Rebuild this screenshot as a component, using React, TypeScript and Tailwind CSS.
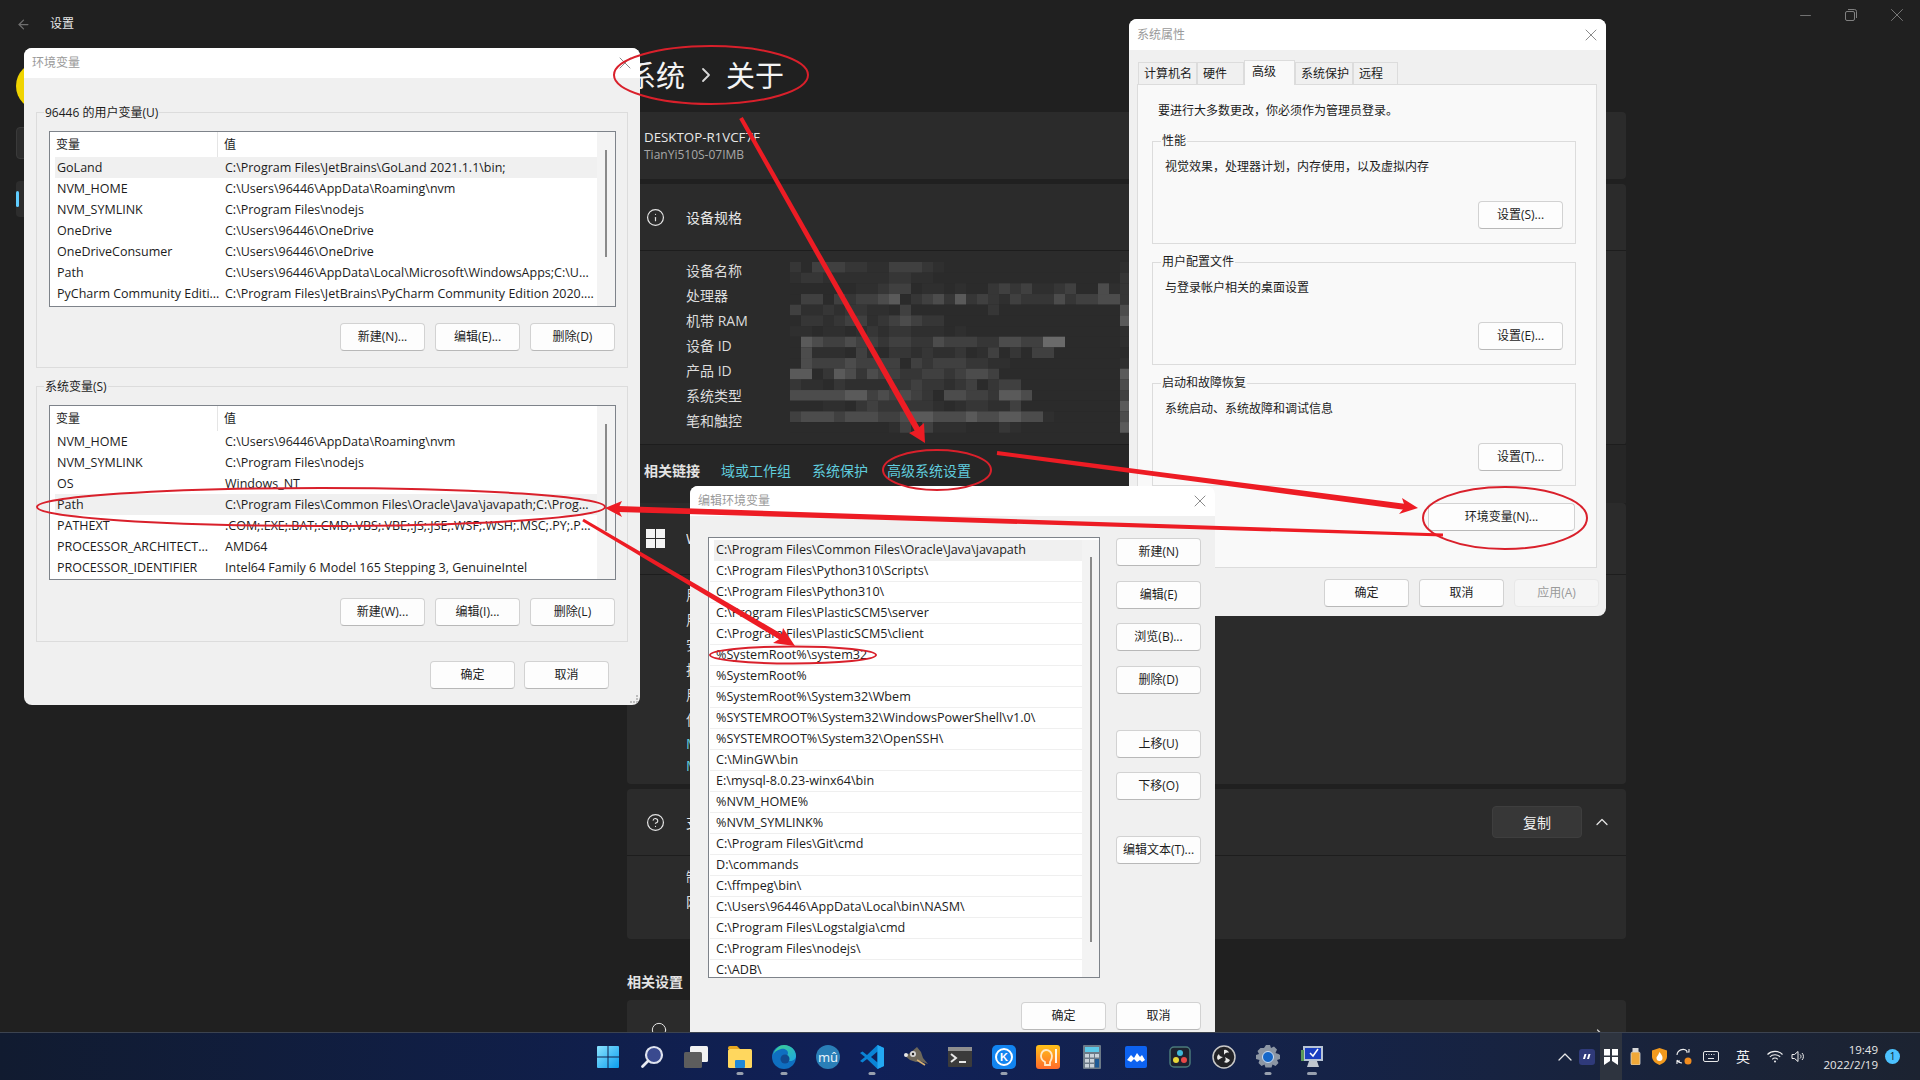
import { ArrowLeft, ChevronRight, ChevronUp, Circle, Info, CircleHelp, Minus, X } from "lucide-react";

const USER_VARS = [
    ["GoLand", "C:\\Program Files\\JetBrains\\GoLand 2021.1.1\\bin;"],
    ["NVM_HOME", "C:\\Users\\96446\\AppData\\Roaming\\nvm"],
    ["NVM_SYMLINK", "C:\\Program Files\\nodejs"],
    ["OneDrive", "C:\\Users\\96446\\OneDrive"],
    ["OneDriveConsumer", "C:\\Users\\96446\\OneDrive"],
    ["Path", "C:\\Users\\96446\\AppData\\Local\\Microsoft\\WindowsApps;C:\\U..."],
    ["PyCharm Community Editi...", "C:\\Program Files\\JetBrains\\PyCharm Community Edition 2020...."],
];

const SYSTEM_VARS = [
    ["NVM_HOME", "C:\\Users\\96446\\AppData\\Roaming\\nvm"],
    ["NVM_SYMLINK", "C:\\Program Files\\nodejs"],
    ["OS", "Windows_NT"],
    ["Path", "C:\\Program Files\\Common Files\\Oracle\\Java\\javapath;C:\\Prog..."],
    ["PATHEXT", ".COM;.EXE;.BAT;.CMD;.VBS;.VBE;.JS;.JSE;.WSF;.WSH;.MSC;.PY;.P..."],
    ["PROCESSOR_ARCHITECT...", "AMD64"],
    ["PROCESSOR_IDENTIFIER", "Intel64 Family 6 Model 165 Stepping 3, GenuineIntel"],
];

const PATH_ENTRIES = [
    "C:\\Program Files\\Common Files\\Oracle\\Java\\javapath",
    "C:\\Program Files\\Python310\\Scripts\\",
    "C:\\Program Files\\Python310\\",
    "C:\\Program Files\\PlasticSCM5\\server",
    "C:\\Program Files\\PlasticSCM5\\client",
    "%SystemRoot%\\system32",
    "%SystemRoot%",
    "%SystemRoot%\\System32\\Wbem",
    "%SYSTEMROOT%\\System32\\WindowsPowerShell\\v1.0\\",
    "%SYSTEMROOT%\\System32\\OpenSSH\\",
    "C:\\MinGW\\bin",
    "E:\\mysql-8.0.23-winx64\\bin",
    "%NVM_HOME%",
    "%NVM_SYMLINK%",
    "C:\\Program Files\\Git\\cmd",
    "D:\\commands",
    "C:\\ffmpeg\\bin\\",
    "C:\\Users\\96446\\AppData\\Local\\bin\\NASM\\",
    "C:\\Program Files\\Logstalgia\\cmd",
    "C:\\Program Files\\nodejs\\",
    "C:\\ADB\\",
];

const SPEC_LABELS = ["设备名称", "处理器", "机带 RAM", "设备 ID", "产品 ID", "系统类型", "笔和触控"];

// pixelated block over the device specs, one digit per cell
const MOSAIC = [
    "2033322113332100000000000000001",
    "1221111112211000000000000000002",
    "0000001123301101002323112300412",
    "0330323345023425232132224233442",
    "3112122110300000002000000000004",
    "0221233123432200000000000000005",
    "1101101212211101000000000000001",
    "0543343323322433322443366000001",
    "0411103102212112013020330000000",
    "0433343333032333221100000000001",
    "5502542433223323443000000000005",
    "2110211112232212302330000000004",
    "4444455343432044332554000000003",
    "0001102322222101221130000000005",
    "3444344433455444544554410000004",
    "0000000001303111000210000000005",
];
const MOSAIC_COLORS = ["#2b2b2b", "#2f2f2f", "#363636", "#404040", "#4c4c4c", "#5a5a5a", "#6a6a6a"];

const Btn = ({ label, w = "w-[85px]", disabled = false }: { label: string; w?: string; disabled?: boolean }) => (
    <div
        className={`${w} h-[28px] shrink-0 flex items-center justify-center rounded-[4px] border text-[12px] whitespace-nowrap ${
            disabled
                ? "bg-[#f5f5f5] border-[#e8e8e8] text-[#9a9a9a]"
                : "bg-[#fdfdfd] border-[#d2d2d2] border-b-[#b8b8b8] text-[#1c1c1c]"
        }`}
    >
        {label}
    </div>
);

const TitleBar = ({ title, h = "h-[30px]" }: { title: string; h?: string }) => (
    <div className={`${h} shrink-0 bg-white rounded-t-[8px] flex items-center justify-between pl-[8px] pr-[5px]`}>
        <span className="text-[12px] text-[#9a9a9a]">{title}</span>
        <X size={20} strokeWidth={1.1} className="text-[#808080]" />
    </div>
);

const VarList = ({ rows, selected, h }: { rows: string[][]; selected: number; h: string }) => (
    <div className={`${h} bg-white border border-[#7e838a] flex overflow-hidden`}>
        <div className="w-[547px] shrink-0">
            <div className="h-[25px] flex items-center text-[12px] text-[#1c1c1c]">
                <div className="w-[168px] h-full flex items-center pl-[6px] border-r border-[#e5e5e5]">变量</div>
                <div className="pl-[6px]">值</div>
            </div>
            {rows.map((row, index) => (
                <div
                    key={index}
                    className={`ml-[5px] h-[21px] pt-[1px] flex items-center text-[12.5px] text-[#1c1c1c] whitespace-nowrap ${
                        index === selected ? "bg-[#f0f0f0]" : ""
                    }`}
                >
                    <div className="w-[170px] pl-[2px] shrink-0">{row[0]}</div>
                    <div>{row[1]}</div>
                </div>
            ))}
        </div>
        <div className="flex-1 bg-[#f3f3f3] flex justify-center">
            <div className="w-[2px] h-[107px] mt-[18px] bg-[#8a8a8a]" />
        </div>
    </div>
);

const VarGroup = ({
    title,
    rows,
    selected,
    listH,
    btnMt,
    labels,
}: {
    title: string;
    rows: string[][];
    selected: number;
    listH: string;
    btnMt: string;
    labels: string[];
}) => (
    <div className="relative border border-[#dcdcdc] h-[256px] pl-[12px] pr-[11px] pt-[18px]">
        <span className="absolute -top-[8px] left-[7px] bg-[#f0f0f0] px-[1px] text-[12px] leading-[16px] text-[#1c1c1c]">
            {title}
        </span>
        <VarList rows={rows} selected={selected} h={listH} />
        <div className={`flex justify-end gap-[10px] pr-[1px] ${btnMt}`}>
            {labels.map((label) => (
                <Btn key={label} label={label} />
            ))}
        </div>
    </div>
);

const EnvWindow = () => (
    <div className="absolute left-[24px] top-[48px] w-[616px] h-[657px] bg-[#f0f0f0] rounded-[8px] flex flex-col">
        <TitleBar title="环境变量" />
        <div className="px-[12px] pt-[34px]">
            <VarGroup
                title="96446 的用户变量(U)"
                rows={USER_VARS}
                selected={0}
                listH="h-[176px]"
                btnMt="mt-[16px]"
                labels={["新建(N)...", "编辑(E)...", "删除(D)"]}
            />
            <div className="h-[18px]" />
            <VarGroup
                title="系统变量(S)"
                rows={SYSTEM_VARS}
                selected={3}
                listH="h-[175px]"
                btnMt="mt-[18px]"
                labels={["新建(W)...", "编辑(I)...", "删除(L)"]}
            />
            <div className="flex justify-end gap-[9px] mt-[19px] pr-[19px]">
                <Btn label="确定" />
                <Btn label="取消" />
            </div>
        </div>
        <div className="absolute right-[2px] bottom-[2px] w-[8px] h-[8px] border-r-2 border-b-2 border-dotted border-[#bdbdbd]" />
    </div>
);

const PropGroup = ({ title, desc, button }: { title: string; desc: string; button: string }) => (
    <div className="relative h-[103px] border border-[#dcdcdc] px-[12px] pt-[17px] mb-[18px]">
        <span className="absolute -top-[9px] left-[8px] bg-[#f9f9f9] px-[1px] text-[12px] leading-[16px] text-[#1c1c1c]">
            {title}
        </span>
        <div className="text-[12px] leading-[16px] text-[#1c1c1c]">{desc}</div>
        <div className="flex justify-end mt-[26px]">
            <Btn label={button} />
        </div>
    </div>
);

const SystemWindow = () => {
    const tabs = [
        { name: "计算机名", w: "w-[59px]" },
        { name: "硬件", w: "w-[47px]" },
        { name: "高级", w: "w-[51px]", active: true },
        { name: "系统保护", w: "w-[58px]" },
        { name: "远程", w: "w-[45px]" },
    ];
    return (
        <div className="absolute left-[1129px] top-[19px] w-[477px] h-[597px] bg-[#f0f0f0] rounded-[8px] flex flex-col">
            <TitleBar title="系统属性" h="h-[31px]" />
            <div className="pl-[8px] pr-[9px] pt-[8px] h-[34px] flex items-end">
                <div className="pl-[1px] flex items-end">
                    {tabs.map((tab) =>
                        tab.active ? (
                            <div
                                key={tab.name}
                                className={`${tab.w} h-[25px] -mb-[1px] relative z-10 bg-[#f9f9f9] border border-b-0 border-[#dcdcdc] text-[12px] pl-[7px] pt-[2px] text-[#1c1c1c]`}
                            >
                                {tab.name}
                            </div>
                        ) : (
                            <div
                                key={tab.name}
                                className={`${tab.w} h-[22px] bg-[#f0f0f0] border border-b-0 border-[#dcdcdc] text-[12px] pl-[5px] flex items-center text-[#1c1c1c]`}
                            >
                                {tab.name}
                            </div>
                        )
                    )}
                </div>
            </div>
            <div className="ml-[8px] mr-[9px] h-[484px] bg-[#f9f9f9] border border-[#dcdcdc] pl-[14px] pr-[20px] pt-[18px]">
                <div className="pl-[6px] text-[12px] leading-[16px] text-[#1c1c1c]">
                    {"要进行大多数更改\uFF0C你必须作为管理员登录。"}
                </div>
                <div className="h-[22px]" />
                <PropGroup
                    title="性能"
                    desc={"视觉效果\uFF0C处理器计划\uFF0C内存使用\uFF0C以及虚拟内存"}
                    button="设置(S)..."
                />
                <PropGroup title="用户配置文件" desc="与登录帐户相关的桌面设置" button="设置(E)..." />
                <PropGroup title="启动和故障恢复" desc="系统启动、系统故障和调试信息" button="设置(T)..." />
                <div className="flex justify-end pr-[1px] -mt-[1px]">
                    <Btn label="环境变量(N)..." w="w-[147px]" />
                </div>
            </div>
            <div className="flex justify-end gap-[10px] pr-[7px] mt-[11px]">
                <Btn label="确定" />
                <Btn label="取消" />
                <Btn label="应用(A)" disabled />
            </div>
        </div>
    );
};

const EditWindow = () => {
    const side = [
        { label: "新建(N)", mt: "mt-[1px]" },
        { label: "编辑(E)", mt: "mt-[15px]" },
        { label: "浏览(B)...", mt: "mt-[14px]" },
        { label: "删除(D)", mt: "mt-[15px]" },
        { label: "上移(U)", mt: "mt-[36px]" },
        { label: "下移(O)", mt: "mt-[14px]" },
        { label: "编辑文本(T)...", mt: "mt-[36px]" },
    ];
    return (
        <div className="absolute left-[690px] top-[486px] w-[525px] h-[546px] bg-[#f0f0f0] rounded-t-[8px] flex flex-col">
            <TitleBar title="编辑环境变量" />
            <div className="pl-[18px] pr-[14px] pt-[21px]">
                <div className="flex gap-[16px]">
                    <div className="w-[392px] h-[441px] shrink-0 bg-white border border-[#7e838a] flex overflow-hidden pt-[2px]">
                        <div className="w-[373px] shrink-0 pl-[1px]">
                            {PATH_ENTRIES.map((entry, index) => (
                                <div
                                    key={entry}
                                    className={`h-[21px] flex items-center text-[12.6px] text-[#1c1c1c] whitespace-nowrap border-b ${
                                        index === 0 ? "bg-[#f0f0f0] border-[#f0f0f0] ml-[4px] pl-[2px]" : "border-[#efefef] pl-[6px]"
                                    }`}
                                >
                                    {entry}
                                </div>
                            ))}
                        </div>
                        <div className="flex-1 bg-[#f3f3f3] flex justify-center">
                            <div className="w-[2px] h-[385px] mt-[17px] bg-[#8a8a8a]" />
                        </div>
                    </div>
                    <div className="flex flex-col">
                        {side.map((item) => (
                            <div key={item.label} className={item.mt}>
                                <Btn label={item.label} />
                            </div>
                        ))}
                    </div>
                </div>
                <div className="flex justify-end gap-[10px] mt-[24px]">
                    <Btn label="确定" />
                    <Btn label="取消" />
                </div>
            </div>
        </div>
    );
};

const Card = ({ className = "", children }: { className?: string; children?: React.ReactNode }) => (
    <div className={`bg-[#2b2b2b] rounded-[4px] ${className}`}>{children}</div>
);

// rows that sit almost wholly behind the edit window, only their first strokes show
const PeekRow = ({ label, h = "h-[25px]", color = "text-[#dcdcdc]" }: { label: string; h?: string; color?: string }) => (
    <div className={`${h} w-[5px] overflow-hidden flex items-center text-[14px] whitespace-nowrap ${color}`}>{label}</div>
);

const SettingsPage = () => (
    <div className="absolute inset-0 bg-[#202020] flex flex-col text-white">
        <div className="h-[48px] shrink-0 flex items-center">
            <ArrowLeft size={15} className="ml-[16px] text-[#6f6f6f]" />
            <span className="ml-[19px] text-[12px] text-[#e8e8e8]">设置</span>
            <div className="ml-auto flex items-center -mt-[18px] text-[#808080]">
                <div className="w-[46px] flex justify-center">
                    <Minus size={17} strokeWidth={1.2} />
                </div>
                <div className="w-[46px] flex justify-center">
                    <svg width="12" height="12" viewBox="0 0 12 12" fill="none" stroke="currentColor" strokeWidth="1">
                        <rect x="0.500" y="2.500" width="9" height="9" rx="1.500" />
                        <path d="M3 0.500h6.500a2 2 0 0 1 2 2V9" />
                    </svg>
                </div>
                <div className="w-[46px] flex justify-center">
                    <X size={22} strokeWidth={1} />
                </div>
            </div>
        </div>
        <div className="flex flex-1 min-h-0">
            <aside className="w-[627px] shrink-0 pl-[16px]">
                <div className="w-[48px] h-[48px] mt-[14px] rounded-full bg-[#f0d400]" />
                <div className="w-[200px] h-[32px] mt-[17px] rounded-[4px] bg-[#2d2d2d] border border-[#3a3a3a]" />
                <div className="relative w-[200px] h-[36px] mt-[22px] rounded-[4px] bg-[#2d2d2d]">
                    <div className="absolute left-0 top-[10px] w-[3px] h-[16px] rounded-full bg-[#60cdff]" />
                </div>
            </aside>
            <main className="w-[999px] shrink-0 flex flex-col">
                <div className="h-[54px] shrink-0 flex items-center text-[29px] leading-none text-[#f4f4f4]">
                    <span>系统</span>
                    <ChevronRight size={24} strokeWidth={1.8} className="ml-[9px] mr-[8px] text-[#d8d8d8]" />
                    <span>关于</span>
                </div>
                <div className="h-[10px] shrink-0" />
                <Card className="h-[67px] shrink-0 pl-[17px] flex flex-col justify-center">
                    <div className="text-[13.3px] leading-[18px] text-[#e8e8e8]">DESKTOP-R1VCF7F</div>
                    <div className="text-[12px] leading-[18px] text-[#a8a8a8]">TianYi510S-07IMB</div>
                </Card>
                <div className="h-[5px] shrink-0" />
                <Card className="shrink-0">
                    <div className="h-[67px] flex items-center pl-[19px] gap-[21px] border-b border-[#1d1d1d]">
                        <Info size={19} strokeWidth={1.5} className="text-[#e4e4e4]" />
                        <span className="text-[14px] text-[#e8e8e8]">设备规格</span>
                    </div>
                    <div className="h-[194px] relative pl-[59px] pt-[7px]">
                        {SPEC_LABELS.map((label) => (
                            <div key={label} className="h-[25px] flex items-center text-[14px] text-[#dcdcdc]">
                                {label}
                            </div>
                        ))}
                        <svg className="absolute left-[163px] top-[11px]" width="341" height="171">
                            {MOSAIC.map((row, y) =>
                                row.split("").map((c, x) => (
                                    <rect
                                        key={`${x}-${y}`}
                                        x={x * 11}
                                        y={y * 10.67}
                                        width="11"
                                        height="10.7"
                                        fill={MOSAIC_COLORS[Number(c)]}
                                    />
                                ))
                            )}
                        </svg>
                    </div>
                </Card>
                <div className="h-[59px] shrink-0 bg-[#262626] border-t border-[#1d1d1d] pl-[17px] flex items-center -mt-[1px] pb-[8px] text-[14px] gap-[21px]">
                    <span className="font-bold text-[#e4e4e4]">相关链接</span>
                    <span className="text-[#60cdde]">域或工作组</span>
                    <span className="text-[#60cdde]">系统保护</span>
                    <span className="text-[#60cdde] -ml-[2px]">高级系统设置</span>
                </div>
                <Card className="h-[281px] shrink-0">
                    <div className="h-[72px] flex items-center pl-[19px] gap-[21px] border-b border-[#1d1d1d]">
                        <svg width="19" height="19" viewBox="0 0 19 19" fill="#f4f4f4">
                            <rect x="0" y="0" width="9" height="9" />
                            <rect x="10" y="0" width="9" height="9" />
                            <rect x="0" y="10" width="9" height="9" />
                            <rect x="10" y="10" width="9" height="9" />
                        </svg>
                        <PeekRow label="Windows 规格" h="h-[20px]" color="text-[#e8e8e8]" />
                    </div>
                    <div className="pl-[59px] pt-[7px]">
                        {["用户", "用途", "安装日期", "批次", "用量", "使用"].map((label) => (
                            <PeekRow key={label} label={label} />
                        ))}
                        <PeekRow label="Microsoft 服务协议" h="h-[22px]" color="text-[#60cdde]" />
                        <PeekRow label="Microsoft 软件许可" h="h-[22px]" color="text-[#60cdde]" />
                    </div>
                </Card>
                <div className="h-[5px] shrink-0" />
                <Card className="h-[150px] shrink-0">
                    <div className="h-[67px] flex items-center pl-[19px] gap-[21px] pr-[14px] border-b border-[#1d1d1d]">
                        <CircleHelp size={19} strokeWidth={1.5} className="text-[#e4e4e4]" />
                        <PeekRow label="支持" h="h-[20px]" color="text-[#e8e8e8]" />
                        <div className="ml-auto w-[90px] h-[32px] rounded-[4px] bg-[#373737] border border-[#3e3e3e] flex items-center justify-center text-[14px] text-[#f0f0f0]">
                            复制
                        </div>
                        <ChevronUp size={20} strokeWidth={1.5} className="-ml-[11px] text-[#e4e4e4]" />
                    </div>
                    <div className="pl-[59px] pt-[8px]">
                        <PeekRow label="制造商" />
                        <PeekRow label="网站" />
                    </div>
                </Card>
                <div className="h-[61px] shrink-0 flex items-end pb-[8px] text-[14px] font-bold text-[#e4e4e4]">相关设置</div>
                <Card className="flex-1 flex items-start pl-[24px] pr-[16px] pt-[22px] gap-[24px] min-h-[40px]">
                    <Circle size={16} strokeWidth={1.5} className="text-[#e4e4e4]" />
                    <PeekRow label="产品密钥" h="h-[19px]" color="text-[#e8e8e8]" />
                    <ChevronRight size={20} strokeWidth={1.5} className="ml-auto mt-[3px] text-[#cfcfcf]" />
                </Card>
            </main>
        </div>
    </div>
);

const Arrow = ({
    from,
    to,
    w1,
    w2,
    head,
}: {
    from: number[];
    to: number[];
    w1: number;
    w2: number;
    head: string;
}) => {
    const dx = to[0] - from[0];
    const dy = to[1] - from[1];
    const len = Math.hypot(dx, dy);
    const nx = -dy / len;
    const ny = dx / len;
    const pts = [
        [from[0] + (nx * w1) / 2, from[1] + (ny * w1) / 2],
        [to[0] + (nx * w2) / 2, to[1] + (ny * w2) / 2],
        [to[0] - (nx * w2) / 2, to[1] - (ny * w2) / 2],
        [from[0] - (nx * w1) / 2, from[1] - (ny * w1) / 2],
    ]
        .map((p) => p.join(","))
        .join(" ");
    return (
        <g fill="#ed1c24">
            <polygon points={pts} />
            <polygon points={head} />
        </g>
    );
};

const Annotations = () => (
    <svg className="absolute inset-0 pointer-events-none" width="1920" height="1080">
        <g fill="none" stroke="#d9202b" strokeWidth="2">
            <ellipse cx="711" cy="75" rx="97" ry="29" />
            <ellipse cx="937" cy="470" rx="54" ry="20" />
            <ellipse cx="321" cy="507" rx="284" ry="19" />
            <ellipse cx="793" cy="655" rx="83" ry="8.5" />
            <ellipse cx="1505" cy="518" rx="82" ry="31" />
        </g>
        <Arrow from={[741, 118]} to={[921, 436]} w1={4} w2={6} head="925,443 909,433 916,430 924,423" />
        <Arrow from={[997, 453]} to={[1406, 507]} w1={4} w2={6} head="1418,508 1402,498 1405,507 1399,514" />
        <Arrow from={[1443, 535]} to={[618, 509]} w1={3} w2={6} head="605,508 622,501 618,509 622,517" />
        <Arrow from={[583, 520]} to={[786, 640]} w1={3} w2={6} head="795,646 773,643 781,638 783,628" />
    </svg>
);

const Dash = ({ w = "w-[7px]" }: { w?: string }) => (
    <div className={`absolute bottom-[5px] left-1/2 -translate-x-1/2 ${w} h-[3px] rounded-full bg-[#98a0ae]`} />
);

const TaskIcon = ({ dash, dashW, children }: { dash?: boolean; dashW?: string; children: React.ReactNode }) => (
    <div className="relative w-[44px] h-full shrink-0 flex items-center justify-center">
        {children}
        {dash && <Dash w={dashW} />}
    </div>
);

const Taskbar = () => (
    <div className="absolute left-0 right-0 bottom-0 h-[48px] flex items-center border-t border-[#3c4350] bg-gradient-to-r from-[#111b30] via-[#102058] via-45% to-[#1c2331]">
        <div className="w-[586px] shrink-0" />
        <TaskIcon>
            <svg width="24" height="24" viewBox="0 0 24 24">
                <defs>
                    <linearGradient id="startGrad" x1="0" y1="0" x2="1" y2="1">
                        <stop offset="0" stopColor="#8be3ff" />
                        <stop offset="1" stopColor="#0a9eef" />
                    </linearGradient>
                </defs>
                <path d="M1 2a1 1 0 0 1 1-1h9.500v10.500H1zM12.500 1H22a1 1 0 0 1 1 1v9.500H12.500zM1 12.500h10.500V23H2a1 1 0 0 1-1-1zM12.500 12.500H23V22a1 1 0 0 1-1 1h-9.500z" fill="url(#startGrad)" />
            </svg>
        </TaskIcon>
        <TaskIcon>
            <svg width="24" height="24" viewBox="0 0 24 24">
                <circle cx="14" cy="10" r="8" fill="#3a4a8f" stroke="#dfe3ee" strokeWidth="2.200" />
                <path d="M8 16l-5.500 5.500" stroke="#e8ebf2" strokeWidth="2.800" strokeLinecap="round" />
            </svg>
        </TaskIcon>
        <TaskIcon>
            <svg width="24" height="24" viewBox="0 0 24 24">
                <rect x="6" y="1" width="18" height="16" rx="1.500" fill="#f2f2f2" />
                <rect x="0" y="7" width="18" height="16" rx="1.500" fill="#5d5d5d" />
            </svg>
        </TaskIcon>
        <TaskIcon dash>
            <svg width="25" height="22" viewBox="0 0 25 22">
                <path d="M0 2a2 2 0 0 1 2-2h7l3 3H0z" fill="#e8a820" />
                <rect x="0" y="3" width="24" height="19" rx="1.500" fill="#ffd75e" />
                <rect x="7" y="14" width="10" height="8" rx="1" fill="#1e88d8" />
            </svg>
        </TaskIcon>
        <TaskIcon dash>
            <svg width="24" height="24" viewBox="0 0 24 24">
                <defs>
                    <linearGradient id="edgeGrad" x1="0" y1="0" x2="1" y2="1">
                        <stop offset="0" stopColor="#3fd18c" />
                        <stop offset="1" stopColor="#1ea8e0" />
                    </linearGradient>
                </defs>
                <circle cx="12" cy="12" r="12" fill="#0f6fc0" />
                <path d="M1 10C3 3 8 0 12 0c7 0 12 5 12 11 0 3-3 5-6 5-2 0-5-1-5-3s3-2 3-5c0-3-4-5-7-4-4 1-7 3-8 6z" fill="url(#edgeGrad)" />
                <circle cx="13" cy="14" r="4.500" fill="#114a8f" />
            </svg>
        </TaskIcon>
        <TaskIcon>
            <svg width="24" height="24" viewBox="0 0 24 24">
                <circle cx="12" cy="12" r="12" fill="#2a7fb8" />
                <text x="12" y="17" textAnchor="middle" fontSize="13" fill="#e6f2fa" fontFamily="Noto Sans">mû</text>
            </svg>
        </TaskIcon>
        <TaskIcon dash>
            <svg width="24" height="24" viewBox="0 0 24 24">
                <path d="M17.500 0L24 3v18l-6.500 3L7 14l-4.500 3.500L0 16l5-4-5-4 2.500-1.500L7 10z" fill="#0a84d6" />
                <path d="M17.500 6.500L11 12l6.500 5.500z" fill="#102058" />
                <path d="M17.500 0L24 3v18l-6.500 3z" fill="#23a8f2" />
            </svg>
        </TaskIcon>
        <TaskIcon>
            <svg width="26" height="20" viewBox="0 0 26 20">
                <path d="M14 0l4 5 2 6 5 6-8-3-4 1-6-2-5-4 5-3z" fill="#6d675a" />
                <circle cx="3" cy="8" r="2" fill="#e8e8e8" />
                <circle cx="10" cy="7" r="3" fill="#d8d8d8" />
                <circle cx="10" cy="7" r="1.200" fill="#222222" />
                <path d="M14 13l8 5" stroke="#d8b070" strokeWidth="1.500" />
            </svg>
        </TaskIcon>
        <TaskIcon>
            <svg width="24" height="20" viewBox="0 0 24 20">
                <rect width="24" height="20" rx="1" fill="#3b3b3b" />
                <rect width="24" height="4" fill="#8f8f8f" />
                <path d="M3 7l5 4-5 4" fill="none" stroke="#e8e8e8" strokeWidth="2" />
                <rect x="11" y="14" width="7" height="2" fill="#e8e8e8" />
            </svg>
        </TaskIcon>
        <TaskIcon dash>
            <svg width="24" height="24" viewBox="0 0 24 24">
                <rect width="24" height="24" rx="5" fill="#1284f0" />
                <circle cx="12" cy="12" r="8" fill="none" stroke="#ffffff" strokeWidth="2" />
                <text x="12" y="16" textAnchor="middle" fontSize="11" fontWeight="700" fill="#ffffff" fontFamily="Liberation Sans">K</text>
            </svg>
        </TaskIcon>
        <TaskIcon>
            <svg width="24" height="24" viewBox="0 0 24 24">
                <defs>
                    <linearGradient id="musicGrad" x1="0" y1="0" x2="0" y2="1">
                        <stop offset="0" stopColor="#ffc21a" />
                        <stop offset="1" stopColor="#ff6a2a" />
                    </linearGradient>
                </defs>
                <rect width="24" height="24" rx="3" fill="url(#musicGrad)" />
                <path d="M10 5a6 6 0 0 1 6 6c0 3-1 4-2 6v3H9v-3a7 7 0 0 1-4-6c0-3 2-6 5-6z" fill="none" stroke="#ffe9c8" strokeWidth="1.800" />
                <path d="M20 4v14" stroke="#ffffff" strokeWidth="1.800" />
            </svg>
        </TaskIcon>
        <TaskIcon>
            <svg width="18" height="24" viewBox="0 0 18 24">
                <rect width="18" height="24" rx="1" fill="#6c7a88" />
                <rect x="2" y="2" width="14" height="5" fill="#5cc8e8" />
                <g fill="#c9d2da">
                    <rect x="2" y="9" width="4" height="3.500" />
                    <rect x="7" y="9" width="4" height="3.500" />
                    <rect x="12" y="9" width="4" height="3.500" />
                    <rect x="2" y="14" width="4" height="3.500" />
                    <rect x="7" y="14" width="4" height="3.500" />
                    <rect x="2" y="19" width="4" height="3.500" />
                    <rect x="7" y="19" width="4" height="3.500" />
                </g>
                <rect x="12" y="14" width="4" height="8.500" fill="#1e5a96" />
            </svg>
        </TaskIcon>
        <TaskIcon>
            <svg width="22" height="22" viewBox="0 0 22 22">
                <rect width="22" height="22" rx="2" fill="#0d62f0" />
                <path d="M2 14l4-5 3 3 3-5 3 4 2-2 3 5-3 2-2-2-3 2-3-3-3 3-2-1z" fill="#ffffff" />
            </svg>
        </TaskIcon>
        <TaskIcon>
            <svg width="22" height="22" viewBox="0 0 22 22">
                <rect x="1" y="1" width="20" height="20" rx="4" fill="#1d2230" stroke="#4a7a7a" strokeWidth="1.500" />
                <circle cx="11" cy="7" r="3" fill="#3fb8d8" />
                <circle cx="7" cy="14" r="3" fill="#e8d838" />
                <circle cx="15" cy="14" r="3" fill="#e84848" />
            </svg>
        </TaskIcon>
        <TaskIcon>
            <svg width="24" height="24" viewBox="0 0 24 24">
                <circle cx="12" cy="12" r="11" fill="#222226" stroke="#c8c8c8" strokeWidth="1.500" />
                <path d="M12 5a4 4 0 0 1 5 3c-2-1-4 0-5 2zM18 15a4 4 0 0 1-6 2c2-1 2-3 1-5zM6 15a4 4 0 0 1 1-6c0 2 2 3 4 3z" fill="#e8e8e8" />
            </svg>
        </TaskIcon>
        <TaskIcon dash>
            <svg width="24" height="24" viewBox="0 0 24 24">
                <path d="M10 0h4l1 3 3-1.500 3 3L19.500 8l3 1 1.500 1v4l-3 1 1.500 3-3 3-3-1.500-1 3h-6l-1-3-3 1.500-3-3L3.500 15 0 14v-4l3-1-1.500-3 3-3L8 3z" fill="#8c96a4" />
                <circle cx="12" cy="12" r="5.500" fill="#1466c8" stroke="#cfe0f4" strokeWidth="1" />
            </svg>
        </TaskIcon>
        <TaskIcon dash dashW="w-[10px]">
            <svg width="24" height="24" viewBox="0 0 24 24">
                <rect x="3" y="1" width="20" height="15" fill="#b8c4d4" />
                <rect x="5" y="3" width="16" height="11" fill="#1a3fc0" />
                <path d="M10 8l3 3 5-7" fill="none" stroke="#ffffff" strokeWidth="1.500" />
                <rect x="1" y="5" width="3" height="11" fill="#5a9a5a" />
                <path d="M9 16h8l2 6H7z" fill="#c0c6ce" />
            </svg>
        </TaskIcon>

        <div className="ml-auto flex items-center h-full text-white">
            <ChevronUp size={24} strokeWidth={1.3} className="text-[#e8e8e8] mr-[2px]" />
            <div className="w-[16px] h-[16px] rounded-[3px] bg-[#2f3a7a] flex items-center justify-center mr-[5px]">
                <svg width="8" height="5" viewBox="0 0 8 5" fill="#ffffff">
                    <path d="M1.500 0h2L2 5H0zM5.500 0h2L6 5H4z" />
                </svg>
            </div>
            <div className="w-[22px] h-full bg-[#2e343f] flex items-center justify-center">
                <svg width="14" height="16" viewBox="0 0 14 16" fill="#ffffff">
                    <rect x="0" y="0" width="6" height="6.500" />
                    <rect x="8" y="0" width="6" height="6.500" />
                    <path d="M0 8h6v4l-6 4zM8 8h6v8l-6-4z" />
                </svg>
            </div>
            <div className="w-[26px] flex justify-center">
                <svg width="11" height="17" viewBox="0 0 11 17">
                    <rect x="2.500" y="0" width="6" height="5" fill="#d8d8d8" />
                    <rect x="1" y="4" width="9" height="13" rx="1.500" fill="#f0a838" stroke="#d8d8d8" strokeWidth="0.800" />
                </svg>
            </div>
            <div className="w-[22px] flex justify-center">
                <svg width="15" height="17" viewBox="0 0 15 17">
                    <path d="M7.500 0L15 2.500v6c0 4-3.500 7-7.500 8.500C3.500 15.500 0 12.500 0 8.500v-6z" fill="#f29a1e" />
                    <path d="M7.500 4c2 2.500 3 4 3 6a3 3 0 0 1-6 0c0-1.500 1.500-2 3-6z" fill="#ffffff" />
                </svg>
            </div>
            <div className="w-[26px] flex justify-center">
                <svg width="17" height="17" viewBox="0 0 17 17" fill="none">
                    <path d="M2 7a6 6 0 0 1 10-4M14 1v3h-3M2 12a6 6 0 0 0 5 3M2 16v-3h3" stroke="#f0f0f0" strokeWidth="1.100" />
                    <circle cx="13" cy="13" r="3.500" fill="#f28c1e" />
                </svg>
            </div>
            <div className="w-[30px] flex justify-center">
                <svg width="16" height="11" viewBox="0 0 16 11" fill="none">
                    <rect x="0.500" y="0.500" width="15" height="10" rx="1.500" stroke="#e8e8e8" />
                    <path d="M3 3.500h1M5.500 3.500h1M8 3.500h1M10.500 3.500h1M13 3.500h0M5 7.500h6" stroke="#e8e8e8" />
                </svg>
            </div>
            <div className="w-[34px] text-center text-[14px] text-[#f0f0f0]">英</div>
            <div className="w-[30px] flex justify-center">
                <svg width="16" height="13" viewBox="0 0 16 13" fill="none" stroke="#f0f0f0" strokeWidth="1.100">
                    <path d="M0.500 4.500a10.500 10.500 0 0 1 15 0M2.800 7a7 7 0 0 1 10.400 0M5.300 9.300a3.500 3.500 0 0 1 5.400 0" />
                    <circle cx="8" cy="11.500" r="1" fill="#f0f0f0" stroke="none" />
                </svg>
            </div>
            <div className="w-[18px] flex justify-center">
                <svg width="16" height="13" viewBox="0 0 16 13" fill="none" stroke="#f0f0f0" strokeWidth="1">
                    <path d="M1 4.500h2.500L7 1.500v10l-3.500-3H1z" />
                    <path d="M9 4.500a2.500 2.500 0 0 1 0 4M11 3a5 5 0 0 1 0 7" />
                </svg>
            </div>
            <div className="w-[70px] flex flex-col items-end text-[11.5px] leading-[15px] text-[#e8e8e8]">
                <span>19:49</span>
                <span>2022/2/19</span>
            </div>
            <div className="ml-[7px] mr-[20px] w-[15px] h-[15px] rounded-full bg-[#4cc2ff] flex items-center justify-center text-[10px] text-[#10202c]">
                1
            </div>
        </div>
    </div>
);

export default function App() {
    return (
        <div className="relative w-[1920px] h-[1080px] overflow-hidden font-['Open_Sans','Noto_Sans_CJK_SC',sans-serif]">
            <SettingsPage />
            <EnvWindow />
            <SystemWindow />
            <EditWindow />
            <Annotations />
            <Taskbar />
        </div>
    );
}
